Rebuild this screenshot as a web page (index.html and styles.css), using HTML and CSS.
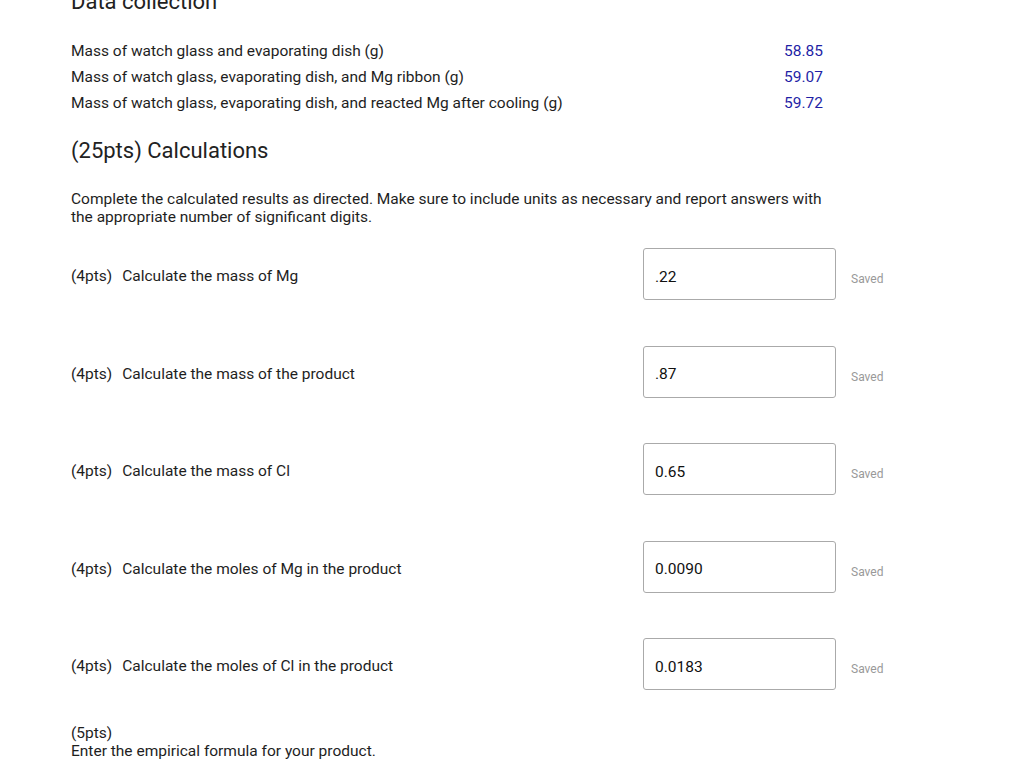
FILE: index.html
```html
<!DOCTYPE html>
<html lang="en">
<head>
    <meta charset="UTF-8">
    <meta name="viewport" content="width=device-width, initial-scale=1.0">
    <title>Lab Report - Calculations</title>
    <link rel="stylesheet" href="styles.css">
</head>
<body>

    <h2 class="section-title top-title">Data collection</h2>

    <div class="data-table">
        <div class="data-label">Mass of watch glass and evaporating dish (g)</div>
        <div class="data-value">58.85</div>
        <div class="data-label">Mass of watch glass, evaporating dish, and Mg ribbon (g)</div>
        <div class="data-value">59.07</div>
        <div class="data-label">Mass of watch glass, evaporating dish, and reacted Mg after cooling (g)</div>
        <div class="data-value">59.72</div>
    </div>

    <h2 class="section-title calc-title">(25pts) Calculations</h2>

    <p class="intro">Complete the calculated results as directed. Make sure to include units as necessary and report answers with the appropriate number of significant digits.</p>

    <div class="questions">
        <div class="question">
            <div class="question-label"><span class="pts">(4pts)</span><span>Calculate the mass of Mg</span></div>
            <input class="answer" type="text" value=".22">
            <span class="status">Saved</span>
        </div>
        <div class="question">
            <div class="question-label"><span class="pts">(4pts)</span><span>Calculate the mass of the product</span></div>
            <input class="answer" type="text" value=".87">
            <span class="status">Saved</span>
        </div>
        <div class="question">
            <div class="question-label"><span class="pts">(4pts)</span><span>Calculate the mass of Cl</span></div>
            <input class="answer" type="text" value="0.65">
            <span class="status">Saved</span>
        </div>
        <div class="question">
            <div class="question-label"><span class="pts">(4pts)</span><span>Calculate the moles of Mg in the product</span></div>
            <input class="answer" type="text" value="0.0090">
            <span class="status">Saved</span>
        </div>
        <div class="question">
            <div class="question-label"><span class="pts">(4pts)</span><span>Calculate the moles of Cl in the product</span></div>
            <input class="answer" type="text" value="0.0183">
            <span class="status">Saved</span>
        </div>
    </div>

    <div class="formula">
        <div>(5pts)</div>
        <div>Enter the empirical formula for your product.</div>
    </div>

</body>
</html>
```

FILE: styles.css
```css
body {
    font-family: Roboto, 'Liberation Sans', sans-serif;
    font-size: 15.5px;
    line-height: 18px;
    color: #1e1e1e;
    background: #fff;
    margin: 0;
    padding: 0 0 0 71px;
    overflow: hidden;
}

.section-title {
    font-size: 22px;
    font-weight: normal;
    line-height: 28px;
    margin: 0;
    color: #222;
}

.top-title {
    margin-top: -12px;
}

.data-table {
    display: grid;
    grid-template-columns: 1fr auto;
    width: 752px;
    margin-top: 22px;
    line-height: 26px;
}

.data-value {
    text-align: right;
    color: #1f1fa6;
}

.calc-title {
    margin-top: 21px;
}

.intro {
    width: 760px;
    margin: 25px 0 0;
}

.questions {
    display: flex;
    flex-direction: column;
    gap: 45.5px;
    margin-top: 22px;
}

.question {
    display: flex;
    align-items: center;
    height: 52px;
}

.question-label {
    width: 572px;
    display: flex;
    gap: 10px;
    padding-top: 4px;
}

.answer {
    box-sizing: border-box;
    width: 193px;
    height: 52px;
    border: 1px solid #aaa;
    border-radius: 3px;
    padding: 5px 11px 0;
    font-family: Roboto, 'Liberation Sans', sans-serif;
    font-size: 15.5px;
    color: #111;
    background: #fff;
    outline: none;
    margin: 0;
}

.status {
    margin-left: 15px;
    padding-top: 10px;
    font-size: 12px;
    color: #999;
}

.formula {
    margin-top: 34px;
}
```
